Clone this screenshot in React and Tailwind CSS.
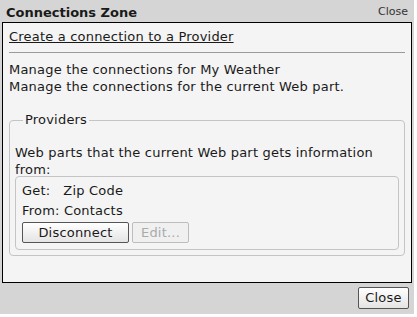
import React from "react";

export default function App() {
  return (
    <div className="w-[417px] h-[317px] bg-white font-['DejaVu_Sans',sans-serif] text-[13px] text-[#1a1a1a] tracking-[0.2px]">
      <div className="w-[414px] h-[314px] bg-[#d5d5d5] flex flex-col">
        {/* title bar */}
        <div className="h-[22px] flex items-center justify-between pl-[6px] pr-[6px] pt-[3px]">
          <span className="font-bold text-[13px] tracking-normal">Connections Zone</span>
          <span className="text-[11px] text-[#333] tracking-normal">Close</span>
        </div>

        {/* body */}
        <div className="mx-[2px] h-[261px] border border-black bg-[#f4f4f4] px-[6px] pt-[5px]">
          <div className="leading-[17px]">
            <span className="underline">Create a connection to a Provider</span>
          </div>
          <div className="mt-[7px] border-t border-[#9a9a9a]" />
          <div className="mt-[8px] leading-[17px]">
            <div>Manage the connections for My Weather</div>
            <div>Manage the connections for the current Web part.</div>
          </div>

          <fieldset className="mt-[17px] border border-[#c4c4c4] rounded-[4px] px-[5px] pb-[5px]">
            <legend className="ml-[8px] px-[2px] leading-[16px]">Providers</legend>
            <div className="mt-[16px] leading-[17px]">
              Web parts that the current Web part gets information from:
            </div>
            <div className="-mt-[2px] border border-[#c4c4c4] rounded-[4px] px-[6px] pt-[4px] pb-[6px]">
              <div className="leading-[20px]">Get:&nbsp;&nbsp; Zip Code</div>
              <div className="leading-[20px]">From: Contacts</div>
              <div className="flex gap-[3px] mt-[1px]">
                <button className="h-[21px] w-[107px] border border-[#555] rounded-[2px] bg-gradient-to-b from-white to-[#e4e4e4] text-[13px]">
                  Disconnect
                </button>
                <button className="h-[21px] w-[57px] border border-[#bdbdbd] rounded-[2px] bg-[#f0f0f0] text-[#aaa] text-[13px]">
                  Edit...
                </button>
              </div>
            </div>
          </fieldset>
        </div>

        {/* footer */}
        <div className="flex-1 flex items-start justify-end pr-[5px] pt-[4px]">
          <button className="h-[22px] w-[51px] border border-[#555] rounded-[2px] bg-gradient-to-b from-white to-[#e4e4e4] text-[13px]">
            Close
          </button>
        </div>
      </div>
    </div>
  );
}
